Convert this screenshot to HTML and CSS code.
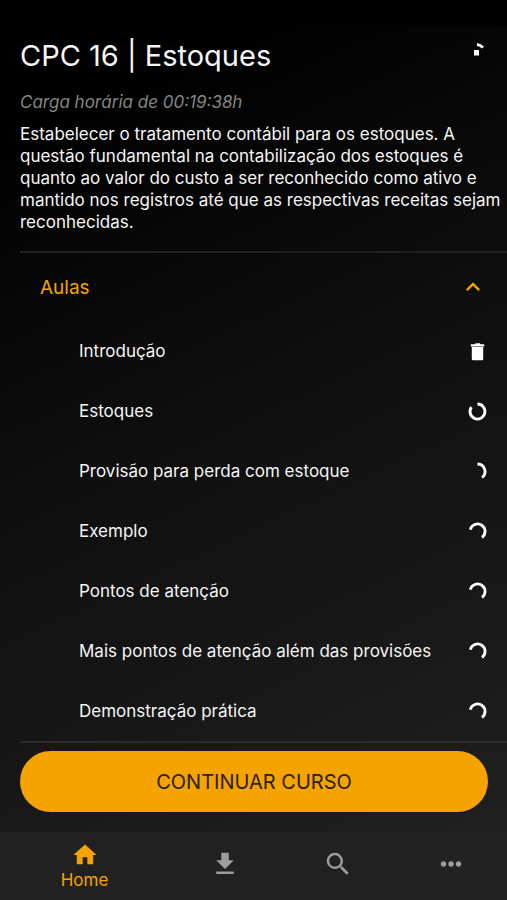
FILE: index.html
```html
<!DOCTYPE html>
<html lang="pt-BR">
<head>
<meta charset="utf-8">
<meta name="viewport" content="width=device-width, initial-scale=1">
<title>CPC 16 | Estoques</title>
<link rel="stylesheet" href="styles.css">
</head>
<body>
<svg width="0" height="0" class="defs" aria-hidden="true">
  <symbol id="loading" viewBox="0 0 24 24"><path d="M5.300 10.600A7.500 7.500 0 1 1 17 18.500" fill="none" stroke="currentColor" stroke-width="2.800"/></symbol>
</svg>
<div class="app">
  <main class="course">
    <header class="head">
      <h1 class="title">CPC 16 | Estoques</h1>
      <svg class="icon" viewBox="0 0 24 24" aria-hidden="true"><path d="M9 13h5v5.500H9z" fill="currentColor"/><path d="M12 7.500Q15.500 8 18 10.500" fill="none" stroke="currentColor" stroke-width="2.800"/></svg>
    </header>
    <p class="duration">Carga horária de 00:19:38h</p>
    <p class="about">Estabelecer o tratamento contábil para os estoques. A questão fundamental na contabilização dos estoques é quanto ao valor do custo a ser reconhecido como ativo e mantido nos registros até que as respectivas receitas sejam reconhecidas.</p>
    <section class="lessons">
      <button class="toggle" type="button" aria-expanded="true">
        <span>Aulas</span>
        <svg class="chevron" viewBox="0 0 24 24" aria-hidden="true"><path fill="currentColor" d="M7.410 15.410 12 10.830l4.590 4.580L18 14l-6-6-6 6z"/></svg>
      </button>
      <ul class="list">
        <li class="lesson"><span>Introdução</span><svg class="icon" viewBox="0 0 24 24" aria-hidden="true"><path fill="currentColor" d="M19.200 5.200h-3.500l-1-1h-4l-1 1H5.800v2.400h13.400z"/><path fill="currentColor" d="M6.800 8v12a1.200 1.200 0 0 0 1.200 1.200h9a1.200 1.200 0 0 0 1.200-1.200V8z"/></svg></li>
        <li class="lesson"><span>Estoques</span><svg class="icon" viewBox="0 0 24 24" aria-hidden="true"><path d="M12.500 5A7.500 7.500 0 1 1 6.400 8.100" fill="none" stroke="currentColor" stroke-width="2.800"/></svg></li>
        <li class="lesson"><span>Provisão para perda com estoque</span><svg class="icon" viewBox="0 0 24 24" aria-hidden="true"><path d="M12.500 5A7.500 7.500 0 0 1 17 18.500" fill="none" stroke="currentColor" stroke-width="2.800"/></svg></li>
        <li class="lesson"><span>Exemplo</span><svg class="icon" aria-hidden="true"><use href="#loading"/></svg></li>
        <li class="lesson"><span>Pontos de atenção</span><svg class="icon" aria-hidden="true"><use href="#loading"/></svg></li>
        <li class="lesson"><span>Mais pontos de atenção além das provisões</span><svg class="icon" aria-hidden="true"><use href="#loading"/></svg></li>
        <li class="lesson"><span>Demonstração prática</span><svg class="icon" aria-hidden="true"><use href="#loading"/></svg></li>
      </ul>
    </section>
    <button class="continue" type="button">CONTINUAR CURSO</button>
  </main>
  <nav class="tabs">
    <a class="tab active" href="#home"><svg class="home-icon" viewBox="0 0 24 24" aria-hidden="true"><path fill="currentColor" d="M10 20v-6h4v6h5v-8h3L12 3 2 12h3v8z"/></svg><span>Home</span></a>
    <a class="tab" href="#downloads" aria-label="Downloads"><svg class="tab-icon" viewBox="0 0 24 24" aria-hidden="true"><path fill="currentColor" d="M5 20h14v-2H5M19 9h-4V3H9v6H5l7 7z"/></svg></a>
    <a class="tab" href="#search" aria-label="Buscar"><svg class="tab-icon" viewBox="0 0 24 24" aria-hidden="true"><path fill="currentColor" d="M9.500 3A6.500 6.500 0 0 1 16 9.500c0 1.610-.59 3.090-1.560 4.230l.27.270h.79l5 5-1.500 1.500-5-5v-.79l-.27-.27A6.520 6.520 0 0 1 9.500 16a6.500 6.500 0 0 1 0-13m0 2C7 5 5 7 5 9.500S7 14 9.500 14 14 12 14 9.500 12 5 9.500 5z"/></svg></a>
    <a class="tab" href="#more" aria-label="Mais"><svg class="tab-icon" viewBox="0 0 24 24" aria-hidden="true"><g fill="currentColor"><circle cx="6" cy="12" r="2.200"/><circle cx="12" cy="12" r="2.200"/><circle cx="18" cy="12" r="2.200"/></g></svg></a>
  </nav>
</div>
</body>
</html>
```
FILE: styles.css
```css
* { box-sizing: border-box; }

body {
  margin: 0;
  background: #000;
  color: #f5f5f5;
  font-family: Inter, "Liberation Sans", sans-serif;
}

button {
  border: 0;
  font: inherit;
  cursor: pointer;
}

.defs { position: absolute; }

.app {
  display: flex;
  flex-direction: column;
  min-height: 100vh;
  padding-top: 25px;
}

.course {
  flex: 1;
  display: flex;
  flex-direction: column;
  padding: 12px 0 20px 20px;
  background: linear-gradient(155deg, #000 10%, #0e0e0e 45%, #202020 100%);
}

.head {
  display: flex;
  justify-content: space-between;
  padding-right: 18px;
}

.title {
  margin: 0;
  font-size: 29px;
  line-height: 38px;
  font-weight: 400;
}

.icon {
  flex: none;
  width: 24px;
  height: 24px;
  color: #fff;
}

.duration {
  margin: 16px 0 10px;
  color: #858585;
  font-size: 17px;
  line-height: 22px;
  font-style: italic;
}

.about {
  margin: 0;
  font-size: 17px;
  line-height: 22px;
}

.lessons {
  margin: 18px 0 8px;
  border-top: 2px solid #202020;
  border-bottom: 2px solid #2b2b2b;
}

.toggle {
  display: flex;
  align-items: center;
  justify-content: space-between;
  width: 100%;
  height: 68px;
  padding: 0 20px;
  background: none;
  color: #f5a300;
  font-size: 19px;
}

.chevron {
  width: 28px;
  height: 28px;
}

.list {
  margin: 0;
  padding: 0;
  list-style: none;
}

.lesson {
  display: flex;
  align-items: center;
  justify-content: space-between;
  height: 60px;
  padding: 0 18px 0 59px;
  font-size: 17px;
}

.continue {
  height: 61px;
  margin-right: 19px;
  border-radius: 31px;
  background: #f5a300;
  color: #2b2108;
  font-size: 20px;
}

.tabs {
  display: flex;
  height: 68px;
  background: #212121;
}

.tab {
  flex: 2;
  display: flex;
  flex-direction: column;
  align-items: center;
  justify-content: center;
  padding-bottom: 4px;
  color: #9c9c9c;
  font-size: 17px;
  line-height: 22px;
  text-decoration: none;
}

.active {
  flex: 3;
  padding-bottom: 0;
  color: #f5a300;
}

.home-icon {
  width: 28px;
  height: 28px;
}

.tab-icon {
  width: 30px;
  height: 30px;
}
```
